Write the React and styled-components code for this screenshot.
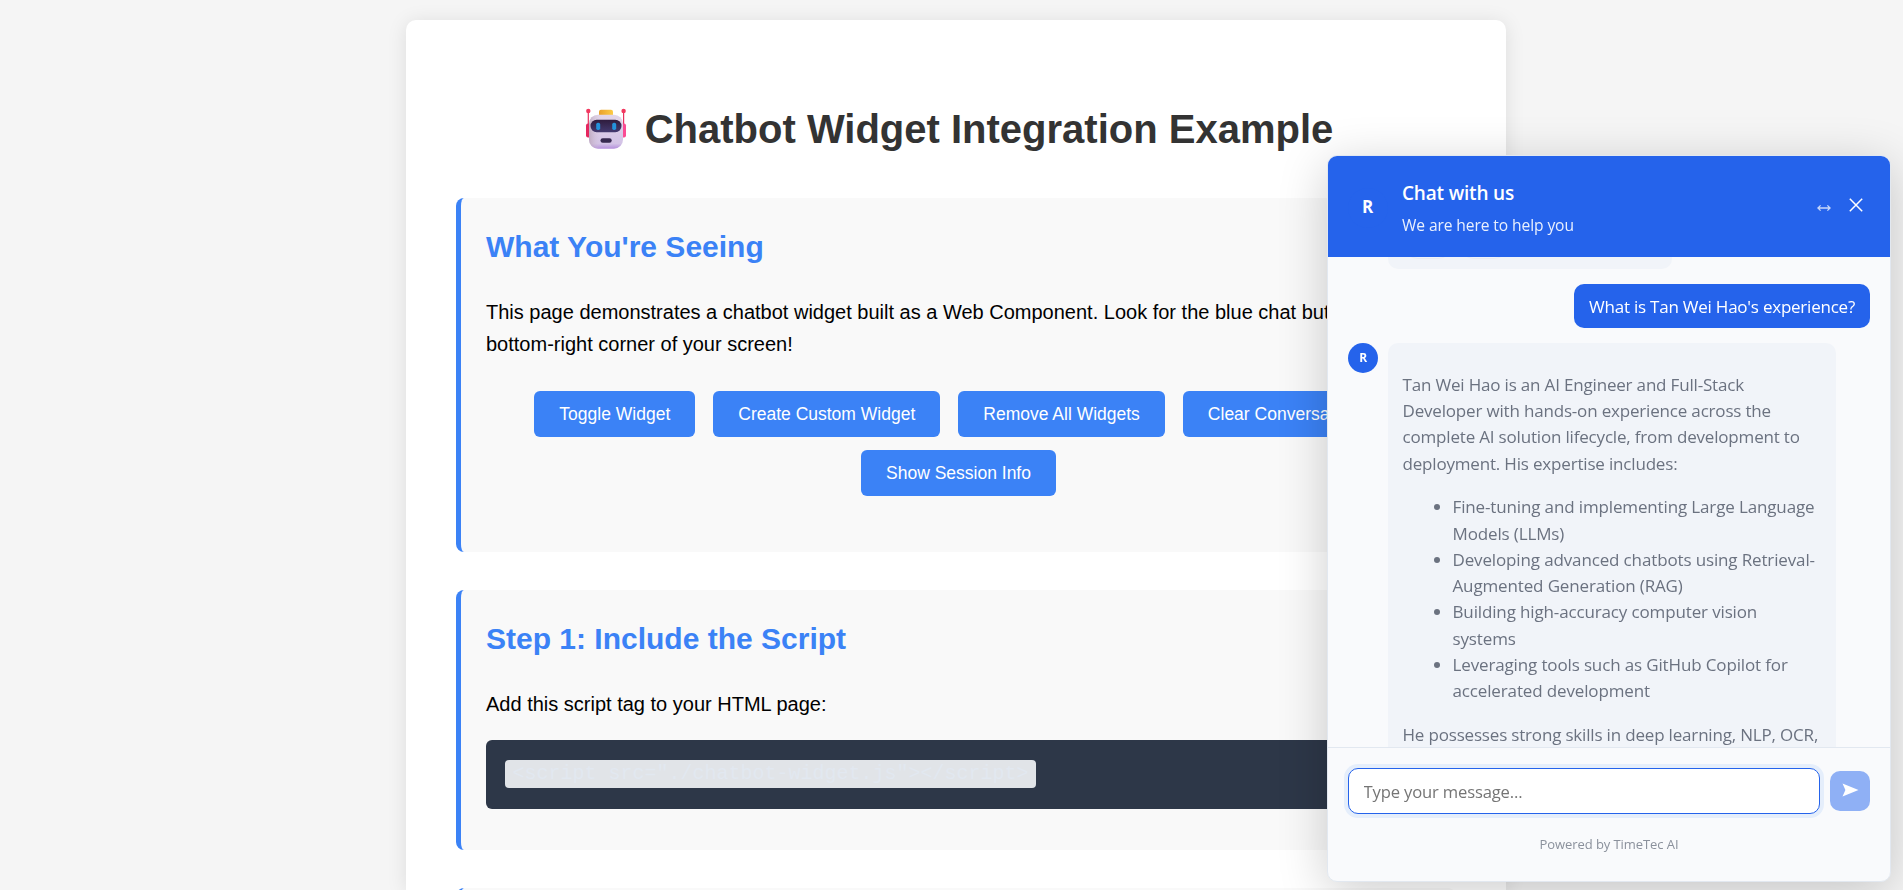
import React from 'react';
import styled, { createGlobalStyle } from 'styled-components';

const GlobalStyle = createGlobalStyle`
  *, *::before, *::after { box-sizing: border-box; }
  html, body { height: 100%; overflow: hidden; }
  body {
    margin: 0;
    padding: 20px 0 0 3px;
    background: #f5f5f5;
    font-family: "Liberation Sans", Arial, sans-serif;
    font-size: 20px;
    line-height: 32px;
    color: #000;
  }
`;

/* ---------- page ---------- */

const Container = styled.main`
  width: 1100px;
  height: 870px;
  overflow: hidden;
  margin: 0 auto 0 403px;
  padding: 77px 50px 0;
  background: #fff;
  border-radius: 10px 10px 0 0;
  box-shadow: 0 2px 20px rgba(0, 0, 0, 0.1);
`;

const PageTitle = styled.h1`
  display: flex;
  align-items: center;
  justify-content: center;
  gap: 12px;
  margin: 0 0 37px;
  font-size: 40px;
  line-height: 64px;
  font-weight: 700;
  color: #333;
  white-space: nowrap;
`;

const RobotSvg = styled.svg`
  width: 54px;
  height: 42px;
  flex: none;
`;

const Section = styled.section`
  height: ${(p) => p.$height}px;
  margin-bottom: 38px;
  padding: 25px;
  background: #f9f9f9;
  border-left: 5px solid #3b82f6;
  border-radius: 8px;
`;

const SectionTitle = styled.h2`
  margin: 0 0 25px;
  font-size: 30px;
  line-height: 48px;
  font-weight: 700;
  color: #3b82f6;
`;

const Paragraph = styled.p`
  margin: 0 0 20px;
`;

const ButtonRow = styled.div`
  display: flex;
  flex-wrap: wrap;
  justify-content: center;
  gap: 13px 18px;
  margin-top: 31px;
`;

const DemoButton = styled.button`
  height: 46px;
  padding: 0 25px;
  border: 0;
  border-radius: 6px;
  background: #3b82f6;
  color: #fff;
  font-family: inherit;
  font-size: 17.5px;
  white-space: nowrap;
`;

const CodeBlock = styled.pre`
  margin: 0;
  height: 69px;
  padding: 20px 19px;
  border-radius: 6px;
  background: #2d3748;
`;

const Code = styled.code`
  display: inline-block;
  height: 28px;
  padding: 0 7.5px;
  border-radius: 4px;
  background: #e1e4e8;
  color: #e2e8f0;
  font: 20px/28px "Liberation Mono", "Courier New", monospace;
  vertical-align: top;
`;

/* ---------- chat widget ---------- */

const Widget = styled.aside`
  position: fixed;
  right: 12px;
  bottom: 8px;
  width: 564px;
  height: 727px;
  display: flex;
  flex-direction: column;
  overflow: hidden;
  border: 1px solid #e2e8f0;
  border-radius: 10px;
  background: #f9fafc;
  box-shadow: 0 10px 50px rgba(0, 0, 0, 0.2);
  font-family: "Open Sans", sans-serif;
  font-size: 17px;
  line-height: 26.25px;
  letter-spacing: -0.18px;
  color: #6b7280;
`;

const WidgetHeader = styled.header`
  flex: none;
  height: 101px;
  display: flex;
  align-items: center;
  padding: 2px 20px 0 19.5px;
  background: #2563eb;
  color: #fff;
`;

const Avatar = styled.div`
  flex: none;
  width: ${(p) => p.$size}px;
  height: ${(p) => p.$size}px;
  display: flex;
  align-items: center;
  justify-content: center;
  border-radius: 50%;
  background: #2563eb;
  color: #fff;
  font-size: ${(p) => p.$font}px;
  font-weight: 700;
`;

const HeaderText = styled.div`
  flex: 1;
  margin-left: 14.5px;
`;

const WidgetTitle = styled.div`
  font-size: 19px;
  line-height: 30px;
  font-weight: 600;
`;

const WidgetSubtitle = styled.div`
  margin-top: 4px;
  font-size: 15.6px;
  line-height: 26px;
  letter-spacing: -0.1px;
  opacity: 0.9;
`;

const HeaderActions = styled.div`
  display: flex;
  align-items: center;
  gap: 18px;
  margin-right: 7px;
`;

const ResizeSvg = styled.svg`
  width: 14px;
  height: 8px;
`;

const CloseSvg = styled.svg`
  width: 14px;
  height: 14px;
  margin-top: -6px;
`;

const Messages = styled.div`
  flex: 1;
  min-height: 0;
  overflow: hidden;
  display: flex;
  flex-direction: column;
  gap: 15px;
  padding: 0 20px;
`;

const MessageRow = styled.div`
  flex: none;
  display: flex;
  align-items: flex-start;
  gap: 10px;
  justify-content: ${(p) => (p.$user ? 'flex-end' : 'flex-start')};
`;

const ScrolledRow = styled(MessageRow)`
  margin-top: -60px;
  padding-left: 40px;
`;

const Bubble = styled.div`
  padding: 11.25px 15px 11.25px 14.5px;
  border-radius: 10px;
  background: #f1f4f9;
`;

const ActionsBubble = styled(Bubble)`
  display: flex;
  align-items: flex-end;
  gap: 6px;
  width: 284px;
  height: 72px;
  padding-bottom: 10px;
`;

const Chip = styled.div`
  width: 50px;
  height: 36px;
  border: 1px solid #e9edf3;
  border-radius: 15px;
`;

const UserBubble = styled(Bubble)`
  height: 44px;
  padding: 0 15px;
  background: #2563eb;
  color: #fff;
  line-height: 45px;
  letter-spacing: -0.23px;
  white-space: nowrap;
`;

const BotBubble = styled(Bubble)`
  width: 448px;
  white-space: nowrap;
`;

const BotParagraph = styled.p`
  margin: 17.5px 0;
`;

const BulletList = styled.ul`
  margin: 17.5px 0;
  padding-left: 50px;
  letter-spacing: -0.14px;
`;

const WidgetFooter = styled.footer`
  flex: none;
  height: 134px;
  padding: 20px 20px 0;
  border-top: 1px solid #e2e8f0;
`;

const InputRow = styled.form`
  display: flex;
  align-items: center;
  gap: 10px;
`;

const MessageInput = styled.input`
  flex: 1;
  min-width: 0;
  height: 46px;
  padding: 0 14.5px;
  border: 1px solid #2563eb;
  border-radius: 10px;
  outline: none;
  background: #fff;
  box-shadow: 0 0 0 4px #e5eefb;
  font: 16.6px/24px "Open Sans", sans-serif;
  letter-spacing: -0.15px;
  &::placeholder { color: #757575; opacity: 1; }
`;

const SendButton = styled.button`
  flex: none;
  width: 40px;
  height: 40px;
  display: flex;
  align-items: center;
  justify-content: center;
  padding: 0 0 3px;
  border: 0;
  border-radius: 10px;
  background: #8fb0f5;
`;

const PoweredBy = styled.div`
  margin-top: 20px;
  text-align: center;
  font-size: 13px;
  line-height: 20px;
  letter-spacing: -0.07px;
  color: #8b919c;
`;

function Robot() {
  return (
    <RobotSvg viewBox="0 0 54 42">
      <defs>
        <linearGradient id="face" x1="0" y1="0" x2="0" y2="1">
          <stop offset="0" stopColor="#e3d6e8" />
          <stop offset="0.85" stopColor="#d3c3e6" />
          <stop offset="1" stopColor="#b48fdc" />
        </linearGradient>
        <linearGradient id="cheek" x1="0" y1="0" x2="1" y2="0">
          <stop offset="0" stopColor="#b9a3b8" stopOpacity="0.8" />
          <stop offset="0.35" stopColor="#d9cbe0" stopOpacity="0" />
        </linearGradient>
        <linearGradient id="visor" x1="0" y1="0" x2="0" y2="1">
          <stop offset="0" stopColor="#2f1c3d" />
          <stop offset="1" stopColor="#443a70" />
        </linearGradient>
        <linearGradient id="cap" x1="0" y1="0" x2="1" y2="0">
          <stop offset="0" stopColor="#e9a02c" />
          <stop offset="1" stopColor="#fdcb45" />
        </linearGradient>
      </defs>
      <rect x="8.7" y="3" width="1.2" height="14" fill="#e8305f" />
      <rect x="44" y="3" width="1.2" height="14" fill="#e8305f" />
      <circle cx="9.3" cy="3" r="2.2" fill="#f2385f" />
      <circle cx="44.6" cy="3" r="2.2" fill="#f2385f" />
      <rect x="7" y="15.5" width="5" height="14" rx="2" fill="#e5265f" />
      <rect x="42" y="15.5" width="5" height="14" rx="2" fill="#fb4b93" />
      <rect x="20" y="1.7" width="14" height="7" rx="2" fill="url(#cap)" />
      <rect x="10" y="6.7" width="34" height="34" rx="9" fill="url(#face)" />
      <rect x="10" y="6.7" width="34" height="34" rx="9" fill="url(#cheek)" />
      <rect x="11.5" y="11.8" width="31" height="12.4" rx="6.2" fill="url(#visor)" />
      <rect x="17.2" y="14.8" width="4" height="7.2" rx="1.7" fill="#2492dc" />
      <rect x="33.2" y="14.8" width="4" height="7.2" rx="1.7" fill="#2492dc" />
      <rect x="21.5" y="30.2" width="11.2" height="4.6" rx="2.2" fill="#36294f" />
    </RobotSvg>
  );
}

function ChatWidget() {
  return (
    <Widget>
      <WidgetHeader>
        <Avatar $size={40} $font={17}>R</Avatar>
        <HeaderText>
          <WidgetTitle>Chat with us</WidgetTitle>
          <WidgetSubtitle>We are here to help you</WidgetSubtitle>
        </HeaderText>
        <HeaderActions>
          <ResizeSvg viewBox="0 0 14 8" fill="none" stroke="#fff" strokeOpacity="0.75" strokeWidth="1.3">
            <path d="M0.8 4H13.2M3.6 1.4L0.9 4L3.6 6.6M10.4 1.4L13.1 4L10.4 6.6" />
          </ResizeSvg>
          <CloseSvg viewBox="0 0 14 14" fill="none" stroke="#fff" strokeWidth="1.5">
            <path d="M0.8 0.8L13.2 13.2M13.2 0.8L0.8 13.2" />
          </CloseSvg>
        </HeaderActions>
      </WidgetHeader>

      <Messages>
        <ScrolledRow>
          <ActionsBubble>
            <Chip />
            <Chip />
          </ActionsBubble>
        </ScrolledRow>
        <MessageRow $user>
          <UserBubble>What is Tan Wei Hao's experience?</UserBubble>
        </MessageRow>
        <MessageRow>
          <Avatar $size={30} $font={12}>R</Avatar>
          <BotBubble>
            <BotParagraph>
              Tan Wei Hao is an AI Engineer and Full-Stack<br />
              Developer with hands-on experience across the<br />
              complete AI solution lifecycle, from development to<br />
              deployment. His expertise includes:
            </BotParagraph>
            <BulletList>
              <li>Fine-tuning and implementing Large Language<br />Models (LLMs)</li>
              <li>Developing advanced chatbots using Retrieval-<br />Augmented Generation (RAG)</li>
              <li>Building high-accuracy computer vision<br />systems</li>
              <li>Leveraging tools such as GitHub Copilot for<br />accelerated development</li>
            </BulletList>
            <BotParagraph>He possesses strong skills in deep learning, NLP, OCR,</BotParagraph>
          </BotBubble>
        </MessageRow>
      </Messages>

      <WidgetFooter>
        <InputRow>
          <MessageInput placeholder="Type your message..." />
          <SendButton type="button">
            <svg width="17" height="14" viewBox="0 0 17 14">
              <path d="M0.5 0.5L16.5 7L0.5 13.5L3.4 7Z" fill="#fff" />
            </svg>
          </SendButton>
        </InputRow>
        <PoweredBy>Powered by TimeTec AI</PoweredBy>
      </WidgetFooter>
    </Widget>
  );
}

export default function App() {
  return (
    <>
      <GlobalStyle />
      <Container>
        <PageTitle>
          <Robot />
          Chatbot Widget Integration Example
        </PageTitle>
        <Section $height={354}>
          <SectionTitle>What You're Seeing</SectionTitle>
          <Paragraph>
            This page demonstrates a chatbot widget built as a Web Component. Look for the blue chat button in the
            bottom-right corner of your screen!
          </Paragraph>
          <ButtonRow>
            <DemoButton>Toggle Widget</DemoButton>
            <DemoButton>Create Custom Widget</DemoButton>
            <DemoButton>Remove All Widgets</DemoButton>
            <DemoButton>Clear Conversation</DemoButton>
            <DemoButton>Show Session Info</DemoButton>
          </ButtonRow>
        </Section>
        <Section $height={260}>
          <SectionTitle>Step 1: Include the Script</SectionTitle>
          <Paragraph>Add this script tag to your HTML page:</Paragraph>
          <CodeBlock>
            <Code>{'<script src="./chatbot-widget.js"></script>'}</Code>
          </CodeBlock>
        </Section>
        <Section $height={260} />
      </Container>
      <ChatWidget />
    </>
  );
}
